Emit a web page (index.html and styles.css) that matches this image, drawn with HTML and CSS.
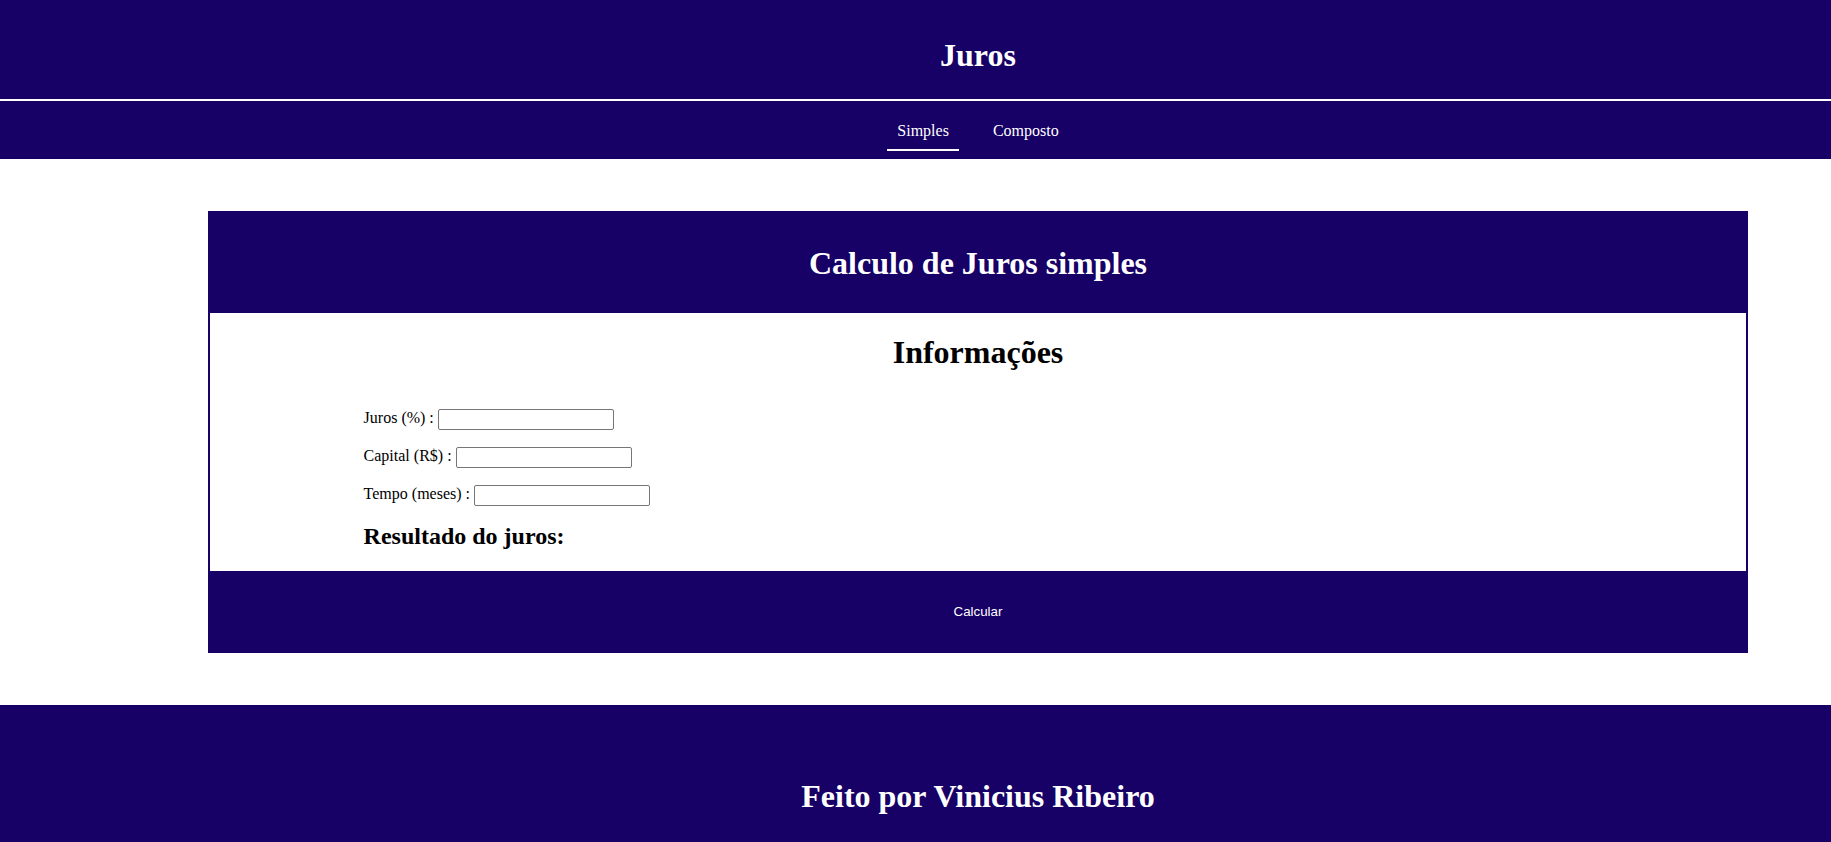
FILE: index.html
```html
<!DOCTYPE html>
<html lang="pt-BR">
<head>
<meta charset="utf-8">
<title>Juros</title>
<link rel="stylesheet" href="styles.css">
</head>
<body>
<header class="site-header">
  <h1 class="site-title">Juros</h1>
</header>
<nav class="site-nav">
  <a class="nav-link active" href="#">Simples</a>
  <a class="nav-link" href="#">Composto</a>
</nav>
<main class="main">
  <section class="card">
    <div class="card-head">
      <h1 class="card-title">Calculo de Juros simples</h1>
    </div>
    <div class="card-body">
      <h1 class="info-title">Informações</h1>
      <form class="form">
        <p class="row"><label>Juros (%) : <input class="field" type="text"></label></p>
        <p class="row"><label>Capital (R$) : <input class="field" type="text"></label></p>
        <p class="row"><label>Tempo (meses) : <input class="field" type="text"></label></p>
        <h2 class="result">Resultado do juros:</h2>
      </form>
    </div>
    <button class="calc-btn" type="button">Calcular</button>
  </section>
</main>
<footer class="site-footer">
  <h1 class="footer-title">Feito por Vinicius Ribeiro</h1>
</footer>
</body>
</html>
```
FILE: styles.css
```css
html, body {
  margin: 0;
  padding: 0;
  background: #ffffff;
}
body {
  font-family: "Liberation Serif", "Times New Roman", serif;
  font-size: 16px;
  line-height: normal;
  color: #000000;
}

.site-header {
  background: #170066;
  padding: 16px 0 3px 125px;
  border-bottom: 2px solid #ffffff;
  text-align: center;
}
.site-title {
  margin: 21.44px 0;
  font-size: 32px;
  font-weight: bold;
  color: #ffffff;
}

.site-nav {
  background: #170066;
  display: flex;
  justify-content: center;
  gap: 24px;
  padding: 11px 0 8px 125px;
}
.nav-link {
  display: block;
  padding: 10px 10px 9px;
  border-bottom: 2px solid transparent;
  color: #ffffff;
  text-decoration: none;
  font-size: 16px;
}
.nav-link.active {
  border-bottom-color: #ffffff;
}

.main {
  padding: 52px 83px 52px 208px;
}
.card {
  border: 2px solid #170066;
  background: #ffffff;
}
.card-head {
  background: #170066;
  padding: 11px 0 9px;
  text-align: center;
}
.card-title {
  margin: 21.44px 0;
  font-size: 32px;
  color: #ffffff;
}
.card-body {
  padding: 21px 10% 0;
}
.info-title {
  margin: 0 0 38.5px;
  font-size: 32px;
  text-align: center;
}
.form {
  margin: 0;
}
.row {
  margin: 0 0 16.3px;
  height: 21.3px;
  display: flex;
  align-items: center;
}
.row label {
  white-space: pre;
}
.field {
  box-sizing: border-box;
  width: 176px;
  height: 21px;
  padding: 1px 2px;
  border: 1px solid #767676;
  border-radius: 2px;
  background: #ffffff;
  vertical-align: middle;
  font-size: 13.33px;
  margin: 0;
}
.result {
  margin: 17px 0 21px;
  font-size: 24px;
}
.calc-btn {
  display: block;
  width: 100%;
  height: 80px;
  margin: 0;
  padding: 2px 0 0;
  border: none;
  background: #170066;
  color: #ffffff;
  font-family: "Liberation Sans", Arial, sans-serif;
  font-size: 13.33px;
  cursor: pointer;
}

.site-footer {
  background: #170066;
  padding: 52px 0 50px 125px;
  text-align: center;
}
.footer-title {
  margin: 21.44px 0;
  font-size: 32px;
  color: #ffffff;
}
```
